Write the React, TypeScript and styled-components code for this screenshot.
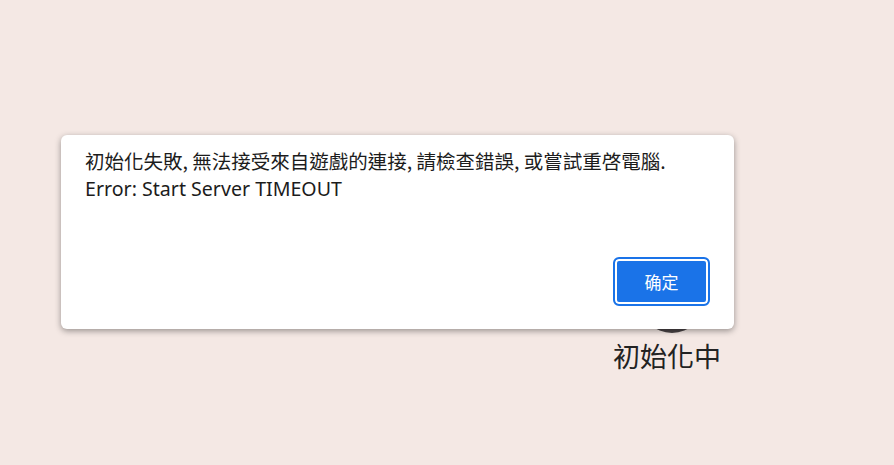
import styled, { createGlobalStyle } from 'styled-components';

const GlobalStyle = createGlobalStyle`
  html, body {
    margin: 0;
    padding: 0;
  }
  body {
    background-color: #f4e8e4;
    font-family: 'Noto Sans', 'Noto Sans CJK TC', sans-serif;
  }
`;

const Page = styled.div`
  position: relative;
  width: 894px;
  height: 465px;
  overflow: hidden;
  background-color: #f4e8e4;
`;

const Loader = styled.div`
  display: flex;
  flex-direction: column;
  align-items: center;
  width: 140px;
  padding-top: 269px;
  padding-left: 602px;
`;

const Spinner = styled.div`
  width: 64px;
  height: 64px;
  border-radius: 50%;
  background-color: #4a4446;
`;

const LoaderText = styled.div`
  margin-top: 6px;
  margin-right: 10px;
  font-family: 'Noto Sans CJK TC', sans-serif;
  font-size: 27px;
  line-height: 34px;
  color: #222;
`;

const Dialog = styled.div`
  position: absolute;
  left: 61px;
  top: 135px;
  width: 673px;
  height: 194px;
  box-sizing: border-box;
  padding: 12px 24px 23px 24px;
  display: flex;
  flex-direction: column;
  background-color: #fff;
  border-radius: 6px;
  box-shadow: 0 2px 6px rgba(0, 0, 0, 0.38);
`;

const Message = styled.div`
  flex: 1;
  font-size: 19.6px;
  line-height: 28px;
  color: #1c1c1c;
`;

const Cjk = styled.div`
  font-family: 'Noto Sans CJK TC', sans-serif;
  font-size: 19.5px;
`;

const Actions = styled.div`
  display: flex;
  justify-content: flex-end;
`;

const OkButton = styled.button`
  width: 97px;
  height: 49px;
  padding: 0;
  border: 2px solid #1a73e8;
  border-radius: 6px;
  box-shadow: inset 0 0 0 2px #fff;
  background-color: #1a73e8;
  color: #fff;
  font-family: 'Noto Sans CJK SC', sans-serif;
  font-size: 17px;
  cursor: pointer;
`;

export default function App() {
  return (
    <Page>
      <GlobalStyle />
      <Loader>
        <Spinner />
        <LoaderText>初始化中</LoaderText>
      </Loader>
      <Dialog>
        <Message>
          <Cjk>初始化失敗, 無法接受來自遊戲的連接, 請檢查錯誤, 或嘗試重啓電腦.</Cjk>
          <div>Error: Start Server TIMEOUT</div>
        </Message>
        <Actions>
          <OkButton>确定</OkButton>
        </Actions>
      </Dialog>
    </Page>
  );
}
